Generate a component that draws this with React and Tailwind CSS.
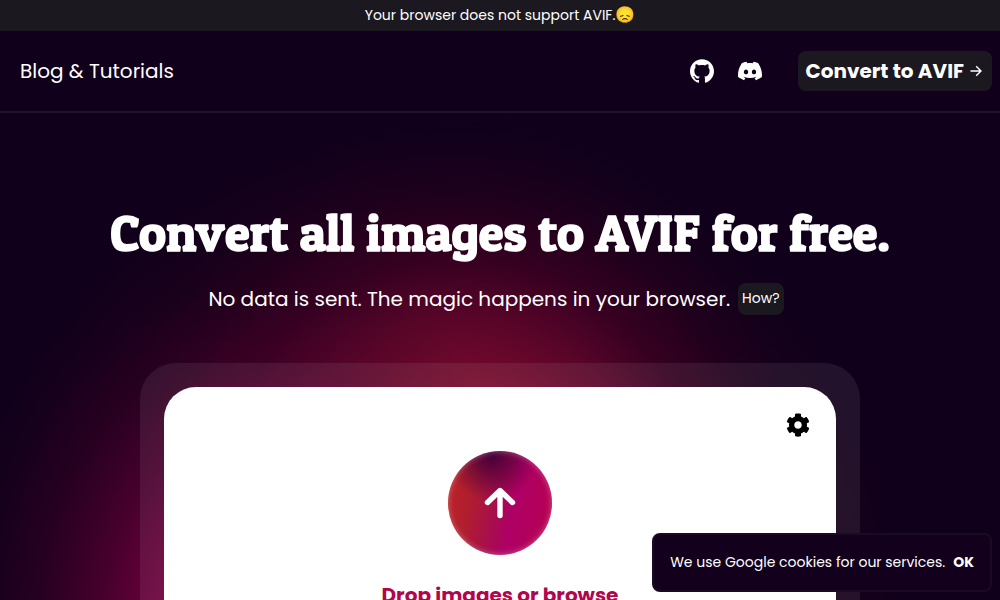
import React from "react";
import { FaCog } from "react-icons/fa";
import { SiDiscord, SiGithub } from "react-icons/si";

function ArrowRight() {
  return (
    <svg viewBox="0 0 12 12" className="size-3" fill="none" stroke="currentColor" strokeWidth="1.4" aria-hidden="true">
      <path d="M0.5 6h10.500M6.200 1.200L11 6l-4.800 4.800" />
    </svg>
  );
}

function ArrowUp() {
  return (
    <svg viewBox="0 0 32 32" className="size-8" fill="none" stroke="white" strokeWidth="5.4" strokeLinecap="round" strokeLinejoin="round" aria-hidden="true">
      <path d="M16 28.500V4M3.500 15.500L16 3.500l12.500 12" />
    </svg>
  );
}

function Notice() {
  return (
    <p className="flex h-[31px] items-center justify-center bg-[#1c181f] pb-0.5 text-sm">
      Your browser does not support AVIF.
      <span className="font-['Noto_Color_Emoji',sans-serif] text-base leading-5">😞</span>
    </p>
  );
}

function Header() {
  return (
    <header className="flex h-[82px] items-center border-b-2 border-white/7 pr-2 pl-5">
      <a href="#blog" className="text-xl">Blog &amp; Tutorials</a>
      <nav className="ml-auto flex items-center">
        <a href="#github" aria-label="GitHub"><SiGithub className="size-6" /></a>
        <a href="#discord" aria-label="Discord" className="ml-6"><SiDiscord className="size-6" /></a>
        <a href="#convert" className="ml-9 flex h-10 items-center gap-1.5 rounded-lg bg-[#1c181f] pr-2.5 pl-2 text-xl font-bold">
          Convert to AVIF
          <ArrowRight />
        </a>
      </nav>
    </header>
  );
}

function DropCard() {
  return (
    <section className="mx-auto mt-12 w-full max-w-[720px] rounded-t-[36px] bg-white/7 px-6 pt-6">
      <div className="rounded-t-[32px] bg-white p-6 text-black">
        <div className="flex h-7 items-center justify-end pr-0.5">
          <button type="button" aria-label="Settings"><FaCog className="size-6" /></button>
        </div>
        <label className="mt-3 flex cursor-pointer flex-col items-center">
          <span className="flex size-[104px] items-center justify-center rounded-full bg-[radial-gradient(ellipse_46px_46px_at_42%_4%,#44003cff_0%,#50003890_50%,#50003800_100%),linear-gradient(100deg,#bc2226_0%,#b01e2e_25%,#a80c50_48%,#ae0066_62%,#b8004e_100%)] shadow-[inset_0_0_6px_rgba(255,255,255,0.35)]">
            <ArrowUp />
          </span>
          <span className="mt-[26px] text-xl font-bold text-[#b3054b]">Drop images or browse</span>
          <input type="file" multiple className="sr-only" />
        </label>
      </div>
    </section>
  );
}

function CookieToast() {
  return (
    <aside className="fixed right-2 bottom-2 flex h-[59px] items-center gap-2 rounded-lg border-2 border-[#1b0a24] bg-[#12001c] px-4 pb-0.5 text-sm">
      We use Google cookies for our services.
      <button type="button" className="font-bold">OK</button>
    </aside>
  );
}

export default function App() {
  return (
    <div className="h-screen overflow-hidden bg-[#11001b] bg-[radial-gradient(ellipse_300px_380px_at_250px_620px,#80004a_0%,#740040e0_30%,#60003890_50%,#44002c50_70%,#28002218_88%,#11001b00_100%),radial-gradient(ellipse_380px_420px_at_460px_530px,#800a2a_0%,#780a2c_34%,#60062ae0_50%,#44002498_65%,#2c001e50_80%,#1c001c18_92%,#11001b00_100%),radial-gradient(ellipse_500px_520px_at_430px_620px,#34001f_0%,#2e001ee0_55%,#20001c90_78%,#16001c30_92%,#11001b00_100%)] font-['Poppins','Inter',sans-serif] text-white">
      <Notice />
      <Header />
      <main>
        <h1 className="mt-22 text-center font-['Patua_One','DejaVu_Serif_Condensed',serif] text-[51px] leading-16 font-bold">
          Convert all images to AVIF for free.
        </h1>
        <div className="mt-[18px] flex h-8 items-center justify-center text-xl">
          <p>No data is sent. The magic happens in your browser.</p>
          <button type="button" className="mx-2 h-8 rounded-lg bg-[#1c181f] px-1 pb-0.5 text-sm">How?</button>
        </div>
        <DropCard />
      </main>
      <CookieToast />
    </div>
  );
}
